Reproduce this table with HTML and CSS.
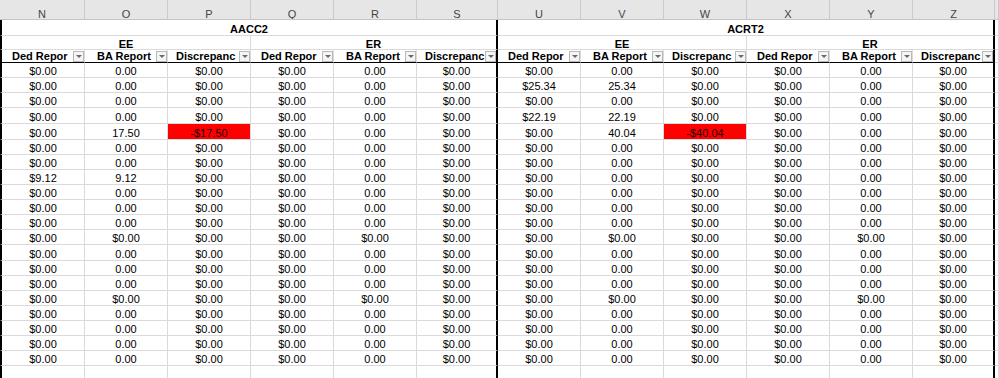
FILE: index.html
```html
<!DOCTYPE html>
<html>
<head>
<meta charset="utf-8">
<link rel="stylesheet" href="styles.css">
</head>
<body>
<div class="sheet">
  <div class="r hd">
    <div class="c">N</div><div class="c">O</div><div class="c">P</div><div class="c">Q</div><div class="c">R</div><div class="c">S</div>
    <div class="c">U</div><div class="c">V</div><div class="c">W</div><div class="c">X</div><div class="c">Y</div><div class="c">Z</div><div class="c"></div>
  </div>
  <div class="r ttl">
    <div class="c s6 L K">AACC2</div><div class="c s6 K">ACRT2</div><div class="c"></div>
  </div>
  <div class="r sub">
    <div class="c s3 L">EE</div><div class="c s3 K">ER</div><div class="c s3">EE</div><div class="c s3 K">ER</div><div class="c"></div>
  </div>
  <div class="r fh">
    <div class="c"><span class="lbl ded">Ded Repor</span><i class="fb"></i></div>
    <div class="c"><span class="lbl ba">BA Report</span><i class="fb"></i></div>
    <div class="c"><span class="lbl disc">Discrepanc</span><i class="fb"></i></div>
    <div class="c"><span class="lbl ded">Ded Repor</span><i class="fb"></i></div>
    <div class="c"><span class="lbl ba">BA Report</span><i class="fb"></i></div>
    <div class="c"><span class="lbl disc">Discrepanc</span><i class="fb"></i></div>
    <div class="c"><span class="lbl ded">Ded Repor</span><i class="fb"></i></div>
    <div class="c"><span class="lbl ba">BA Report</span><i class="fb"></i></div>
    <div class="c"><span class="lbl disc">Discrepanc</span><i class="fb"></i></div>
    <div class="c"><span class="lbl ded">Ded Repor</span><i class="fb"></i></div>
    <div class="c"><span class="lbl ba">BA Report</span><i class="fb"></i></div>
    <div class="c"><span class="lbl disc">Discrepanc</span><i class="fb"></i></div>
    <div class="c"></div>
  </div>

  <div class="r d"><div class="c">$0.00</div><div class="c">0.00</div><div class="c">$0.00</div><div class="c">$0.00</div><div class="c">0.00</div><div class="c">$0.00</div><div class="c">$0.00</div><div class="c">0.00</div><div class="c">$0.00</div><div class="c">$0.00</div><div class="c">0.00</div><div class="c">$0.00</div><div class="c"></div></div>
  <div class="r d"><div class="c">$0.00</div><div class="c">0.00</div><div class="c">$0.00</div><div class="c">$0.00</div><div class="c">0.00</div><div class="c">$0.00</div><div class="c">$25.34</div><div class="c">25.34</div><div class="c">$0.00</div><div class="c">$0.00</div><div class="c">0.00</div><div class="c">$0.00</div><div class="c"></div></div>
  <div class="r d"><div class="c">$0.00</div><div class="c">0.00</div><div class="c">$0.00</div><div class="c">$0.00</div><div class="c">0.00</div><div class="c">$0.00</div><div class="c">$0.00</div><div class="c">0.00</div><div class="c">$0.00</div><div class="c">$0.00</div><div class="c">0.00</div><div class="c">$0.00</div><div class="c"></div></div>
  <div class="r d t"><div class="c">$0.00</div><div class="c">0.00</div><div class="c">$0.00</div><div class="c">$0.00</div><div class="c">0.00</div><div class="c">$0.00</div><div class="c">$22.19</div><div class="c">22.19</div><div class="c">$0.00</div><div class="c">$0.00</div><div class="c">0.00</div><div class="c">$0.00</div><div class="c"></div></div>
  <div class="r d t"><div class="c">$0.00</div><div class="c">17.50</div><div class="c red">-$17.50</div><div class="c">$0.00</div><div class="c">0.00</div><div class="c">$0.00</div><div class="c">$0.00</div><div class="c">40.04</div><div class="c red">-$40.04</div><div class="c">$0.00</div><div class="c">0.00</div><div class="c">$0.00</div><div class="c"></div></div>
  <div class="r d"><div class="c">$0.00</div><div class="c">0.00</div><div class="c">$0.00</div><div class="c">$0.00</div><div class="c">0.00</div><div class="c">$0.00</div><div class="c">$0.00</div><div class="c">0.00</div><div class="c">$0.00</div><div class="c">$0.00</div><div class="c">0.00</div><div class="c">$0.00</div><div class="c"></div></div>
  <div class="r d"><div class="c">$0.00</div><div class="c">0.00</div><div class="c">$0.00</div><div class="c">$0.00</div><div class="c">0.00</div><div class="c">$0.00</div><div class="c">$0.00</div><div class="c">0.00</div><div class="c">$0.00</div><div class="c">$0.00</div><div class="c">0.00</div><div class="c">$0.00</div><div class="c"></div></div>
  <div class="r d"><div class="c">$9.12</div><div class="c">9.12</div><div class="c">$0.00</div><div class="c">$0.00</div><div class="c">0.00</div><div class="c">$0.00</div><div class="c">$0.00</div><div class="c">0.00</div><div class="c">$0.00</div><div class="c">$0.00</div><div class="c">0.00</div><div class="c">$0.00</div><div class="c"></div></div>
  <div class="r d"><div class="c">$0.00</div><div class="c">0.00</div><div class="c">$0.00</div><div class="c">$0.00</div><div class="c">0.00</div><div class="c">$0.00</div><div class="c">$0.00</div><div class="c">0.00</div><div class="c">$0.00</div><div class="c">$0.00</div><div class="c">0.00</div><div class="c">$0.00</div><div class="c"></div></div>
  <div class="r d"><div class="c">$0.00</div><div class="c">0.00</div><div class="c">$0.00</div><div class="c">$0.00</div><div class="c">0.00</div><div class="c">$0.00</div><div class="c">$0.00</div><div class="c">0.00</div><div class="c">$0.00</div><div class="c">$0.00</div><div class="c">0.00</div><div class="c">$0.00</div><div class="c"></div></div>
  <div class="r d"><div class="c">$0.00</div><div class="c">0.00</div><div class="c">$0.00</div><div class="c">$0.00</div><div class="c">0.00</div><div class="c">$0.00</div><div class="c">$0.00</div><div class="c">0.00</div><div class="c">$0.00</div><div class="c">$0.00</div><div class="c">0.00</div><div class="c">$0.00</div><div class="c"></div></div>
  <div class="r d"><div class="c">$0.00</div><div class="c">$0.00</div><div class="c">$0.00</div><div class="c">$0.00</div><div class="c">$0.00</div><div class="c">$0.00</div><div class="c">$0.00</div><div class="c">$0.00</div><div class="c">$0.00</div><div class="c">$0.00</div><div class="c">$0.00</div><div class="c">$0.00</div><div class="c"></div></div>
  <div class="r d t"><div class="c">$0.00</div><div class="c">0.00</div><div class="c">$0.00</div><div class="c">$0.00</div><div class="c">0.00</div><div class="c">$0.00</div><div class="c">$0.00</div><div class="c">0.00</div><div class="c">$0.00</div><div class="c">$0.00</div><div class="c">0.00</div><div class="c">$0.00</div><div class="c"></div></div>
  <div class="r d"><div class="c">$0.00</div><div class="c">0.00</div><div class="c">$0.00</div><div class="c">$0.00</div><div class="c">0.00</div><div class="c">$0.00</div><div class="c">$0.00</div><div class="c">0.00</div><div class="c">$0.00</div><div class="c">$0.00</div><div class="c">0.00</div><div class="c">$0.00</div><div class="c"></div></div>
  <div class="r d"><div class="c">$0.00</div><div class="c">0.00</div><div class="c">$0.00</div><div class="c">$0.00</div><div class="c">0.00</div><div class="c">$0.00</div><div class="c">$0.00</div><div class="c">0.00</div><div class="c">$0.00</div><div class="c">$0.00</div><div class="c">0.00</div><div class="c">$0.00</div><div class="c"></div></div>
  <div class="r d"><div class="c">$0.00</div><div class="c">$0.00</div><div class="c">$0.00</div><div class="c">$0.00</div><div class="c">$0.00</div><div class="c">$0.00</div><div class="c">$0.00</div><div class="c">$0.00</div><div class="c">$0.00</div><div class="c">$0.00</div><div class="c">$0.00</div><div class="c">$0.00</div><div class="c"></div></div>
  <div class="r d"><div class="c">$0.00</div><div class="c">0.00</div><div class="c">$0.00</div><div class="c">$0.00</div><div class="c">0.00</div><div class="c">$0.00</div><div class="c">$0.00</div><div class="c">0.00</div><div class="c">$0.00</div><div class="c">$0.00</div><div class="c">0.00</div><div class="c">$0.00</div><div class="c"></div></div>
  <div class="r d"><div class="c">$0.00</div><div class="c">0.00</div><div class="c">$0.00</div><div class="c">$0.00</div><div class="c">0.00</div><div class="c">$0.00</div><div class="c">$0.00</div><div class="c">0.00</div><div class="c">$0.00</div><div class="c">$0.00</div><div class="c">0.00</div><div class="c">$0.00</div><div class="c"></div></div>
  <div class="r d"><div class="c">$0.00</div><div class="c">0.00</div><div class="c">$0.00</div><div class="c">$0.00</div><div class="c">0.00</div><div class="c">$0.00</div><div class="c">$0.00</div><div class="c">0.00</div><div class="c">$0.00</div><div class="c">$0.00</div><div class="c">0.00</div><div class="c">$0.00</div><div class="c"></div></div>
  <div class="r d"><div class="c">$0.00</div><div class="c">0.00</div><div class="c">$0.00</div><div class="c">$0.00</div><div class="c">0.00</div><div class="c">$0.00</div><div class="c">$0.00</div><div class="c">0.00</div><div class="c">$0.00</div><div class="c">$0.00</div><div class="c">0.00</div><div class="c">$0.00</div><div class="c"></div></div>
  <div class="r end"><div class="c"></div><div class="c"></div><div class="c"></div><div class="c"></div><div class="c"></div><div class="c"></div><div class="c"></div><div class="c"></div><div class="c"></div><div class="c"></div><div class="c"></div><div class="c"></div><div class="c"></div></div>
</div>
</body>
</html>
```

FILE: styles.css
```css
* { box-sizing: border-box; margin: 0; padding: 0; }
html, body { margin: 0; background: #fff; }
body {
  width: 999px;
  height: 378px;
  overflow: hidden;
  font: 11px "Liberation Sans", Arial, sans-serif;
  color: #000;
}
.sheet { display: flex; flex-direction: column; height: 378px; }
.r {
  display: grid;
  grid-template-columns: 85px 83px 83px 83px 83px 81px 83px 83px 83px 83px 83px 82px 1fr;
  flex: none;
}
.c {
  border-right: 1px solid #dadada;
  border-bottom: 1px solid #dadada;
  text-align: center;
  white-space: nowrap;
  overflow: hidden;
  line-height: 13px;
}
.s3 { grid-column: span 3; }
.s6 { grid-column: span 6; }
.L { border-left: 2px solid #000; }
.K { border-right: 2px solid #000; }

.hd { height: 20px; background: #e6e6e6; }
.hd .c { border-right-color: #cacaca; border-bottom-color: #c4c4c4; color: #444; padding-top: 8px; }

.ttl { height: 16px; }
.ttl .c { font-weight: bold; padding-top: 3px; }

.sub { height: 14px; }
.sub .c { font-weight: bold; line-height: 14px; padding-top: 1px; }

.fh { height: 13px; }
.fh .c { font-weight: bold; border-bottom-color: #000; display: flex; align-items: flex-start; text-align: left; }
.fh .c:last-child { border-bottom-color: #dadada; }
.lbl { flex: 1; min-width: 0; line-height: 13px; }
.ded { padding-left: 10px; }
.ba { padding-left: 12px; }
.disc { padding-left: 8px; }
.fb {
  flex: none;
  position: relative;
  width: 11px;
  height: 11px;
  margin: 1px 0 0 2px;
  border: 1px solid #b9b9b9;
  background: #f5f5f5;
}
.fb::after {
  content: "";
  position: absolute;
  left: 2px;
  top: 3px;
  border-left: 3px solid transparent;
  border-right: 3px solid transparent;
  border-top: 3px solid #6a6a6a;
}

.d { height: 15px; }
.d.t { height: 16px; }
.d .c { padding-top: 2px; }
.d.t .c { padding-top: 3px; }
.red { background: #ff0000; color: #1a0000; }

.end { flex: 1; }
.end .c { border-bottom: none; }

.fh > .c:first-child,
.d > .c:first-child,
.end > .c:first-child { border-left: 2px solid #000; }
.fh > .c:nth-child(6),
.fh > .c:nth-child(12),
.d > .c:nth-child(6),
.d > .c:nth-child(12),
.end > .c:nth-child(6),
.end > .c:nth-child(12) { border-right: 2px solid #000; }
```
